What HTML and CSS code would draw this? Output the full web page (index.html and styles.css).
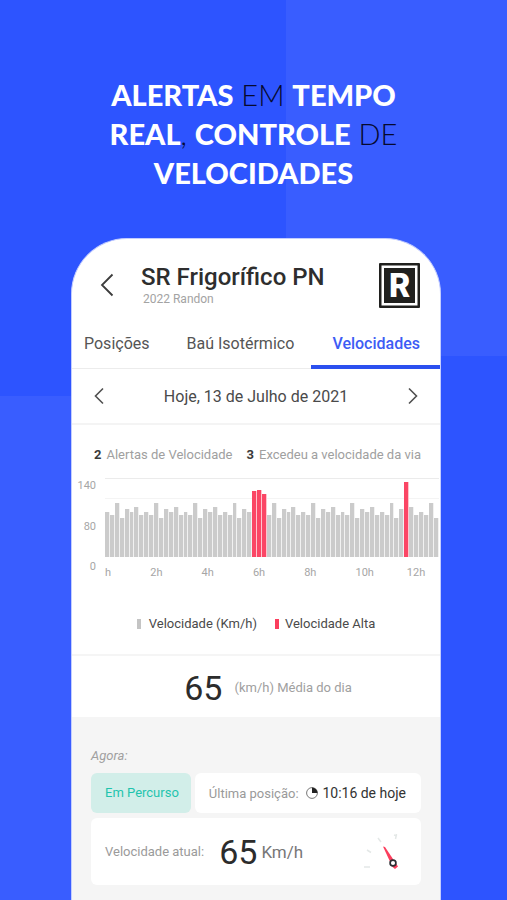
FILE: index.html
```html
<!DOCTYPE html>
<html lang="pt-BR">
<head>
<meta charset="utf-8">
<meta name="viewport" content="width=device-width, initial-scale=1">
<title>Velocidades</title>
<link rel="stylesheet" href="styles.css">
</head>
<body>
<h1 class="headline"><b>ALERTAS</b> EM <b>TEMPO</b><br><b>REAL</b>, <b>CONTROLE</b> DE<br><b>VELOCIDADES</b></h1>
<main class="phone">
  <header class="header">
    <button class="icon-button" type="button" aria-label="Voltar">
      <svg width="14" height="24" viewBox="0 0 14 24"><path d="M12.500 1.500 2 12l10.500 10.500" fill="none" stroke="#3c3c3c" stroke-width="1.800"/></svg>
    </button>
    <div class="vehicle">
      <h2 class="vehicle-name">SR Frigorífico PN</h2>
      <p class="vehicle-model">2022 Randon</p>
    </div>
    <svg class="logo" width="41" height="45" viewBox="0 0 41 45" role="img" aria-label="Randon">
      <rect width="41" height="45" rx="1" fill="#20201e"/>
      <rect x="2.500" y="2.500" width="36" height="40" fill="#fff"/>
      <rect x="5" y="5" width="31" height="35" fill="#20201e"/>
      <text x="20.500" y="34" text-anchor="middle" class="logo-letter">R</text>
    </svg>
  </header>
  <nav class="tabs">
    <a class="tab" href="#posicoes">Posições</a>
    <a class="tab" href="#bau">Baú Isotérmico</a>
    <a class="tab tab-active" href="#velocidades" aria-current="page">Velocidades</a>
  </nav>
  <div class="date-row">
    <button class="icon-button" type="button" aria-label="Dia anterior">
      <svg width="12" height="18" viewBox="0 0 12 18"><path d="M10 1.500 2.500 9l7.500 7.500" fill="none" stroke="#505050" stroke-width="1.600"/></svg>
    </button>
    <span>Hoje, 13 de Julho de 2021</span>
    <button class="icon-button" type="button" aria-label="Próximo dia">
      <svg width="12" height="18" viewBox="0 0 12 18"><path d="M2 1.500 9.500 9 2 16.500" fill="none" stroke="#505050" stroke-width="1.600"/></svg>
    </button>
  </div>
  <section class="speeds">
    <div class="alerts">
      <span><b>2</b>Alertas de Velocidade</span>
      <span><b>3</b>Excedeu a velocidade da via</span>
    </div>
    <div class="chart">
      <div class="y-axis"><span>140</span><span>80</span><span>0</span></div>
      <div class="plot-area">
        <div class="plot" id="plot"></div>
        <div class="x-axis"><span>h</span><span>2h</span><span>4h</span><span>6h</span><span>8h</span><span>10h</span><span>12h</span></div>
      </div>
    </div>
    <div class="legend">
      <span class="legend-item">Velocidade (Km/h)</span>
      <span class="legend-item legend-high">Velocidade Alta</span>
    </div>
  </section>
  <section class="average">
    <span class="big-number">65</span>
    <span class="average-label">(km/h) Média do dia</span>
  </section>
  <section class="now">
    <h3 class="now-title">Agora:</h3>
    <div class="status-row">
      <div class="status">Em Percurso</div>
      <div class="card last-position">
        <span>Última posição:</span>
        <svg width="12" height="12" viewBox="0 0 12 12"><circle cx="6" cy="6" r="5.400" fill="none" stroke="#777" stroke-width="1"/><path d="M6 6V.500A5.500 5.500 0 0 1 11.500 6Z" fill="#222"/></svg>
        <strong>10:16 de hoje</strong>
      </div>
    </div>
    <div class="card current-speed">
      <span>Velocidade atual:</span>
      <span class="big-number">65</span>
      <span class="unit">Km/h</span>
      <svg class="gauge" width="38" height="38" viewBox="0 0 38 38">
        <g stroke="#e4e8e7" stroke-width="1.500" fill="none"><path d="M1 34h6M4 17l4 2.500M15 5l3 4M33.500 1l-1 5M31 2l3 1"/></g>
        <path d="M20 13.500 22 14 35 33.500 32 36 29.500 34Z" fill="#fb3e5d"/>
        <circle cx="30" cy="30" r="2.900" fill="#fff" stroke="#2b2f33" stroke-width="1.700"/>
      </svg>
    </div>
  </section>
</main>
<script src="chart.js"></script>
</body>
</html>
```
FILE: styles.css
```css
* {
  box-sizing: border-box;
}

body {
  margin: 0;
  min-height: 100vh;
  display: flex;
  flex-direction: column;
  background:
    linear-gradient(#395dff, #395dff) right top / 221px 356px no-repeat,
    linear-gradient(#395dff, #395dff) left 396px / 200px 100% no-repeat,
    #2d54ff;
  font-family: Roboto, "Liberation Sans", sans-serif;
  color: #4a4a4a;
}

h1, h2, h3, p {
  margin: 0;
}

.headline {
  padding: 75px 16px 46px;
  text-align: center;
  font-family: Lato, "Open Sans", sans-serif;
  font-size: 29px;
  line-height: 39px;
  font-weight: 300;
  color: #06092e;
}

.headline b {
  font-weight: 900;
  color: #fff;
}

.phone {
  flex: 1;
  display: flex;
  flex-direction: column;
  margin: 0 66px 0 71px;
  border: 1px solid #c3cdff;
  border-bottom: 0;
  border-radius: 56px 56px 0 0;
  background: #fff;
}

.icon-button {
  display: flex;
  padding: 0;
  border: 0;
  background: none;
}

.header {
  display: flex;
  align-items: center;
  height: 92px;
  padding: 0 20px 0 28px;
}

.vehicle {
  flex: 1;
  padding-left: 27px;
}

.vehicle-name {
  font-size: 24px;
  line-height: 28px;
  font-weight: 500;
  color: #2e2e2e;
}

.vehicle-model {
  padding-left: 2px;
  font-size: 12px;
  line-height: 16px;
  color: #a3a3a3;
}

.logo-letter {
  font-family: Inter, sans-serif;
  font-size: 32px;
  font-weight: 800;
  fill: #fff;
}

.tabs {
  display: flex;
  height: 38px;
  border-bottom: 1px solid #ececec;
}

.tab {
  height: 38px;
  padding: 0 17px 0 20px;
  font-size: 16px;
  line-height: 26px;
  white-space: nowrap;
  color: #555;
  text-decoration: none;
}

.tab:first-child {
  padding-left: 12px;
}

.tab-active {
  flex: 1;
  padding-right: 20px;
  border-bottom: 4px solid #2b50ef;
  text-align: right;
  font-weight: 500;
  color: #3d5cf5;
}

.date-row {
  display: flex;
  align-items: center;
  justify-content: space-between;
  height: 56px;
  padding: 0 21px;
  border-bottom: 2px solid #f4f4f4;
  font-size: 16px;
}

.speeds {
  padding-top: 22px;
  border-bottom: 2px solid #f5f5f5;
}

.alerts {
  display: flex;
  justify-content: space-between;
  padding: 0 19px 0 22px;
  font-size: 13px;
  line-height: 16px;
  color: #a0a0a0;
}

.alerts b {
  margin-right: 5px;
  color: #3a3a3a;
}

.chart {
  display: flex;
  gap: 9px;
  padding: 15px 1px 0 4px;
  font-size: 11px;
  line-height: 16px;
  color: #a6a6a6;
}

.y-axis {
  display: flex;
  flex-direction: column;
  justify-content: space-between;
  width: 20px;
  height: 97px;
  text-align: right;
}

.plot-area {
  flex: 1;
}

.plot {
  display: flex;
  align-items: flex-end;
  height: 79px;
  background:
    linear-gradient(#ebebeb, #ebebeb) left top / 100% 1px no-repeat,
    linear-gradient(#f4f4f4, #f4f4f4) left 20px / 100% 1px no-repeat;
}

.bar {
  flex: 1;
  border-right: 1px solid #f1f1f1;
  background: #cbcbcb;
}

.bar-high {
  border-right-color: #ffc4ce;
  background: #fb4665;
}

.x-axis {
  display: grid;
  grid-template-columns: 45fr repeat(5, 51fr) 32fr;
  padding-top: 8px;
}

.legend {
  display: flex;
  justify-content: center;
  gap: 18px;
  padding: 35px 0 22px;
  font-size: 13px;
  line-height: 16px;
}

.legend-item {
  display: flex;
  align-items: center;
  gap: 8px;
}

.legend-item::before {
  content: "";
  width: 4px;
  height: 10px;
  background: #c4c4c4;
}

.legend-high {
  gap: 6px;
}

.legend-high::before {
  background: #fb3e5d;
}

.average {
  display: flex;
  align-items: center;
  justify-content: center;
  gap: 12px;
  height: 61px;
  padding: 2px 0 0 24px;
}

.average-label {
  font-size: 13px;
  color: #a0a0a0;
}

.big-number {
  font-size: 34px;
  line-height: 40px;
  color: #2c2c2c;
}

.now {
  flex: 1;
  padding: 31px 19px 14px;
  background: #f5f5f5;
}

.now-title {
  font-size: 13px;
  line-height: 16px;
  font-weight: 400;
  font-style: italic;
  color: #a0a0a0;
}

.status-row {
  display: flex;
  gap: 4px;
  margin: 9px 0 5px;
}

.status {
  padding: 0 12px 0 14px;
  border-radius: 6px;
  background: #d2eee9;
  font-size: 13px;
  line-height: 40px;
  color: #1fc4ae;
}

.card {
  display: flex;
  align-items: center;
  border-radius: 6px;
  background: #fff;
  font-size: 13px;
  color: #9a9a9a;
}

.last-position {
  flex: 1;
  padding: 0 15px 0 14px;
}

.last-position svg {
  margin: 0 4px 0 auto;
}

.last-position strong {
  font-size: 14px;
  font-weight: 400;
  color: #333;
}

.current-speed {
  height: 67px;
  padding: 0 20px 0 14px;
}

.current-speed .big-number {
  margin: 0 4px 0 15px;
}

.unit {
  font-size: 17px;
  color: #777;
}

.gauge {
  margin-left: auto;
}
```
FILE: chart.js
```js
// Bar heights as a percentage of the plot, one bar every ten minutes or so.
const pattern = [57, 53, 69, 49, 61, 57, 63, 53];
const high = { 30: 84, 31: 85, 32: 80, 61: 95 };
const plot = document.getElementById("plot");

for (let i = 0; i < 68; i++) {
  const bar = document.createElement("div");
  bar.className = i in high ? "bar bar-high" : "bar";
  bar.style.height = (high[i] || pattern[i % 8]) + "%";
  plot.append(bar);
}
```
